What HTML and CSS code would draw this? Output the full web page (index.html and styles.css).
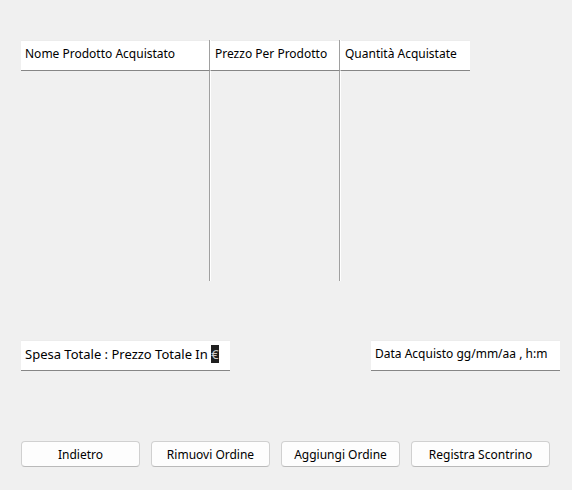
FILE: index.html
```html
<!DOCTYPE html>
<html lang="it">
<head>
<meta charset="utf-8">
<title>Scontrino</title>
<link rel="stylesheet" href="styles.css">
</head>
<body>
<main class="window">
  <table class="products">
    <thead>
      <tr>
        <th class="name" scope="col">Nome Prodotto Acquistato</th>
        <th class="price" scope="col">Prezzo Per Prodotto</th>
        <th class="quantity" scope="col">Quantità Acquistate</th>
      </tr>
    </thead>
    <tbody>
      <tr><td></td><td></td><td></td></tr>
    </tbody>
  </table>
  <div class="summary">
    <p class="field total">Spesa Totale : Prezzo Totale In <mark class="selected">€</mark></p>
    <p class="field date">Data Acquisto gg/mm/aa , h:m</p>
  </div>
  <div class="actions">
    <button class="button" type="button">Indietro</button>
    <button class="button" type="button">Rimuovi Ordine</button>
    <button class="button" type="button">Aggiungi Ordine</button>
    <button class="button wide" type="button">Registra Scontrino</button>
  </div>
</main>
</body>
</html>
```
FILE: styles.css
```css
* {
  box-sizing: border-box;
}

body {
  margin: 0;
  background: #f0f0f0;
  color: #000;
  font: 12px/16px "Noto Sans", sans-serif;
}

.window {
  padding: 40px 12px 24px 21px;
}

.products {
  width: 449px;
  border-collapse: separate;
  border-spacing: 0;
  table-layout: fixed;
}

.products th {
  height: 31px;
  padding: 0 4px 3px;
  background: #fff;
  box-shadow: inset 0 1px #ececec;
  border-bottom: 1px solid #868686;
  font-weight: 400;
  text-align: left;
  white-space: nowrap;
}

.products td {
  height: 210px;
}

.products .name {
  width: 189px;
}

.products .price {
  width: 130px;
}

.products th:not(:last-child),
.products td:not(:last-child) {
  border-right: 1px solid #a0a0a0;
}

.products th:not(:first-child),
.products td:not(:first-child) {
  border-left: 1px solid #fff;
}

.summary {
  display: flex;
  justify-content: space-between;
  margin-top: 60px;
}

.field {
  height: 30px;
  margin: 0;
  padding: 5px 4px;
  background: #fff;
  border-bottom: 1px solid #868686;
  box-shadow: 0 -1px #ececec;
  white-space: nowrap;
}

.total {
  width: 209px;
  font-size: 13px;
}

.date {
  width: 189px;
}

.selected {
  background: #202020;
  color: #ccc;
}

.actions {
  display: flex;
  gap: 11px;
  margin-top: 70px;
}

.button {
  width: 119px;
  height: 26px;
  padding: 1px 0 0;
  background: #fdfdfd;
  border: 1px solid #d0d0d0;
  border-bottom-color: #bababa;
  border-radius: 4px;
  color: #000;
  font: inherit;
}

.wide {
  width: 139px;
}
```
